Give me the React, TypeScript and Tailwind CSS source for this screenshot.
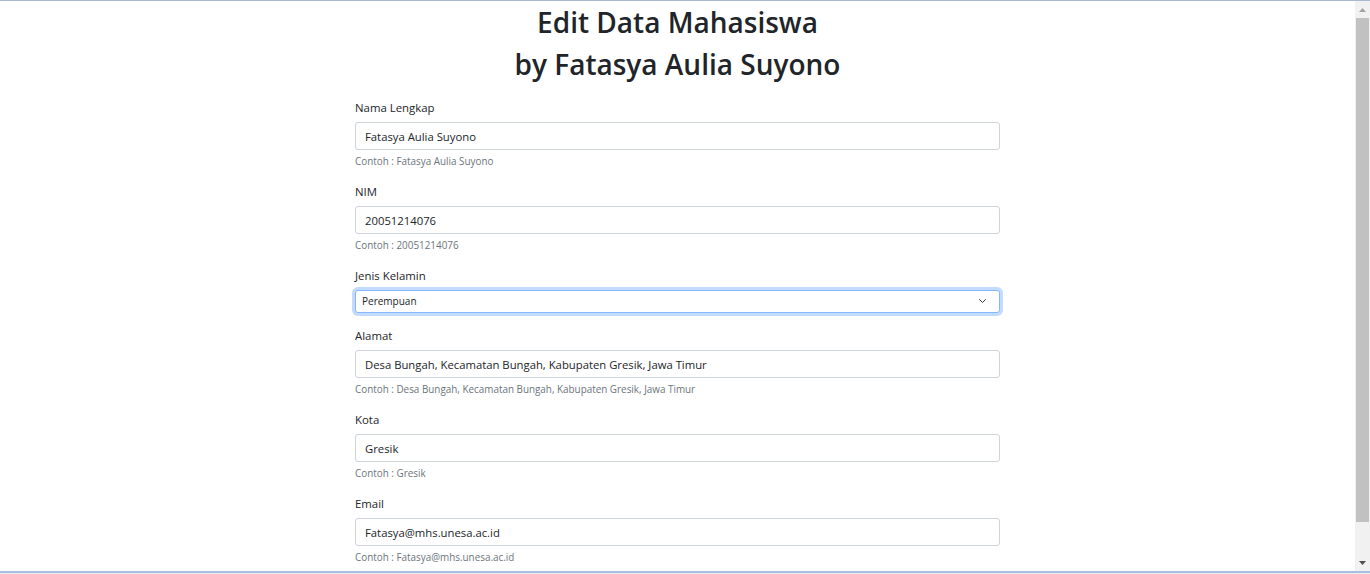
import React from 'react';

const fields = [
  { label: 'Nama Lengkap', value: 'Fatasya Aulia Suyono', hint: 'Contoh : Fatasya Aulia Suyono' },
  { label: 'NIM', value: '20051214076', hint: 'Contoh : 20051214076' },
];

const moreFields = [
  {
    label: 'Alamat',
    value: 'Desa Bungah, Kecamatan Bungah, Kabupaten Gresik, Jawa Timur',
    hint: 'Contoh : Desa Bungah, Kecamatan Bungah, Kabupaten Gresik, Jawa Timur',
  },
  { label: 'Kota', value: 'Gresik', hint: 'Contoh : Gresik' },
  { label: 'Email', value: 'Fatasya@mhs.unesa.ac.id', hint: 'Contoh : Fatasya@mhs.unesa.ac.id' },
];

function Field({ label, value, hint }: { label: string; value: string; hint: string }) {
  return (
    <div className="mb-[13px] flex flex-col">
      <label className="h-[18px] text-[11.4px] leading-[19px] text-[#212529]">{label}</label>
      <input
        readOnly
        value={value}
        className="mt-[6px] h-[28px] w-full rounded-[3px] border border-[#ced4da] bg-white px-[9px] text-[11.3px] text-[#212529] outline-none"
      />
      <small className="mt-[3px] h-[16px] text-[9.9px] leading-[16px] text-[#6c757d]">{hint}</small>
    </div>
  );
}

function Scrollbar() {
  return (
    <div className="flex w-[15px] flex-col items-center bg-[#f1f1f1]">
      <div className="flex h-[17px] w-full items-center justify-center">
        <svg width="7" height="4" viewBox="0 0 7 4">
          <path d="M0 4 L3.5 0 L7 4 Z" fill="#a3a3a3" />
        </svg>
      </div>
      <div className="h-[504px] w-[13px] bg-[#c1c1c1]" />
      <div className="flex-1" />
      <div className="flex h-[17px] w-full items-center justify-center">
        <svg width="7" height="4" viewBox="0 0 7 4">
          <path d="M0 0 L7 0 L3.5 4 Z" fill="#505050" />
        </svg>
      </div>
    </div>
  );
}

export default function App() {
  return (
    <div
      className="flex h-[574px] w-full flex-col overflow-hidden bg-white"
      style={{ fontFamily: '"Open Sans", "Noto Sans", sans-serif' }}
    >
      <div className="h-px w-full bg-[#a9b8d0]" />
      <div className="flex min-h-0 flex-1">
        <div className="flex-1 overflow-hidden">
          <h1 className="mb-[13px] text-center text-[28px] font-semibold leading-[42px] text-[#212529]">
            Edit Data Mahasiswa
            <br />
            by Fatasya Aulia Suyono
          </h1>
          <form className="mx-auto w-[645px]">
            {fields.map((f) => (
              <Field key={f.label} {...f} />
            ))}
            <div className="mb-[13px] flex flex-col">
              <label className="h-[18px] text-[11.4px] leading-[19px] text-[#212529]">Jenis Kelamin</label>
              <div className="relative mt-[6px] h-[23px] w-full rounded-[3px] border border-[#86b7fe] bg-white shadow-[0_0_0_3px_rgba(13,110,253,0.25)]">
                <span className="absolute left-[6px] top-0 text-[10px] leading-[21px] text-[#212529]">Perempuan</span>
                <svg
                  className="absolute right-[11px] top-[6px]"
                  width="11"
                  height="8"
                  viewBox="0 0 16 16"
                >
                  <path d="M2 5l6 6 6-6" fill="none" stroke="#343a40" strokeWidth="2" strokeLinecap="round" strokeLinejoin="round" />
                </svg>
              </div>
            </div>
            {moreFields.map((f) => (
              <Field key={f.label} {...f} />
            ))}
          </form>
        </div>
        <Scrollbar />
      </div>
      <div className="h-[2px] w-full bg-[#a8bde0]" />
      <div className="h-px w-full bg-[#e9eef7]" />
    </div>
  );
}
